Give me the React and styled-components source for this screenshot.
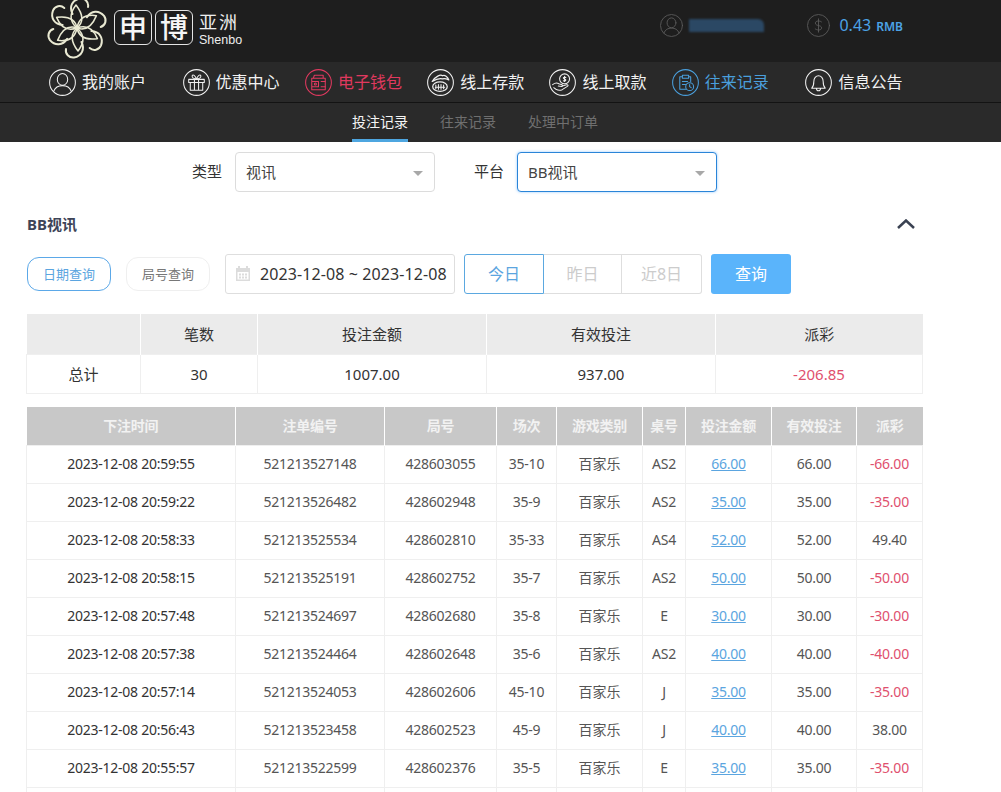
import React from 'react';
import styled, { createGlobalStyle } from 'styled-components';

const GlobalStyle = createGlobalStyle`
  html, body {
    margin: 0;
    padding: 0;
    height: 792px;
    overflow: hidden;
    background: #fff;
    font-family: "Noto Sans", "Open Sans", "Noto Sans CJK SC", sans-serif;
  }
`;

const Page = styled.div`
  width: 1001px;
  height: 792px;
  overflow: hidden;
`;

const TopBar = styled.header`
  height: 62px;
  background: #1e1e1e;
  display: flex;
  align-items: center;
  padding: 0 98px 0 46px;
`;

const Logo = styled.div`
  display: flex;
  align-items: center;
  gap: 3px;
  height: 62px;
  margin-top: -7px;
`;

const LogoMark = styled.svg`
  margin-right: 3px;
`;

const LogoBox = styled.span`
  width: 38px;
  height: 35px;
  box-sizing: border-box;
  border: 1px solid #e4e4e4;
  border-radius: 6px;
  color: #f6f6f6;
  font-size: 28px;
  font-weight: 500;
  line-height: 31px;
  text-align: center;
  font-family: "Noto Sans CJK SC", sans-serif;
`;

const LogoWords = styled.div`
  display: flex;
  flex-direction: column;
  margin: 3px 0 0 3px;
  color: #eee;
`;

const LogoCn = styled.span`
  font-size: 18px;
  line-height: 20px;
  letter-spacing: 2px;
  font-family: "Noto Sans CJK SC", sans-serif;
`;

const LogoEn = styled.span`
  font-size: 12.5px;
  line-height: 14px;
  margin-top: 2px;
  font-family: "Liberation Sans", sans-serif;
`;

const Account = styled.div`
  margin-left: auto;
  display: flex;
  align-items: center;
  margin-top: -12px;
`;

const BlurredName = styled.div`
  width: 75px;
  height: 13px;
  margin: 0 43px 0 6px;
  background: #2b4864;
  border-top-right-radius: 6px;
  filter: blur(1px);
`;

const Balance = styled.span`
  color: #4ca3e6;
  font-size: 16px;
  margin-left: 9px;
`;

const BalanceUnit = styled.span`
  font-size: 12px;
  margin-left: 5px;
  font-weight: 600;
`;

const Nav = styled.nav`
  height: 40px;
  background: #292929;
  border-bottom: 1px solid #131313;
  display: flex;
  align-items: center;
  padding-left: 49px;
`;

const NavItem = styled.a`
  flex: 0 0 ${p => (p.$wide ? 133.6 : 122.3)}px;
  display: flex;
  align-items: center;
  gap: 6px;
  font-size: 16px;
  line-height: 22px;
  color: ${p => p.$color || '#f2f2f2'};
  font-family: "Noto Sans CJK SC", sans-serif;
  white-space: nowrap;
`;

const NavLabel = styled.span`
  padding-bottom: 2px;
`;

const SubNav = styled.div`
  height: 39px;
  background: #2a2a2a;
  display: flex;
  padding-left: 352px;
  gap: 32px;
`;

const SubTab = styled.a`
  box-sizing: border-box;
  height: 39px;
  line-height: 37px;
  font-size: 14px;
  font-family: "Noto Sans CJK SC", sans-serif;
  color: ${p => (p.$active ? '#f4f4f4' : '#6f6f6f')};
  border-bottom: 3px solid ${p => (p.$active ? '#4ea6e0' : 'transparent')};
`;

const Content = styled.main`
  padding: 10px 78px 0 27px;
  font-family: "Noto Sans", "Noto Sans CJK SC", sans-serif;
`;

const SelectRow = styled.div`
  display: flex;
  align-items: center;
  padding-left: 165px;
`;

const SelectLabel = styled.label`
  font-size: 15px;
  color: #333;
  margin-right: 13px;
  margin-top: -4px;
`;

const Select = styled.div`
  box-sizing: border-box;
  width: 200px;
  height: 40px;
  margin-right: 39px;
  padding: 0 11px 2px 10px;
  display: flex;
  align-items: center;
  justify-content: space-between;
  font-size: 15px;
  color: #444;
  background: #fff;
  border-radius: 4px;
  border: 1px solid ${p => (p.$focus ? '#2a85d8' : '#dcdcdc')};
  box-shadow: ${p => (p.$focus ? '0 0 3px rgba(64,158,255,.55)' : 'none')};
`;

const Caret = styled.i`
  width: 0;
  height: 0;
  border-left: 5px solid transparent;
  border-right: 5px solid transparent;
  border-top: 5px solid #a8a8a8;
  margin: 4px 0 0;
`;

const SectionHead = styled.div`
  display: flex;
  align-items: center;
  justify-content: space-between;
  margin-top: 22px;
  height: 20px;
  padding-right: 8px;
`;

const SectionTitle = styled.h3`
  margin: -2px 0 0;
  font-size: 15px;
  font-weight: 700;
  color: #3d4457;
`;

const FilterRow = styled.div`
  display: flex;
  align-items: center;
  margin-top: 20px;
  height: 40px;
`;

const Pill = styled.button`
  width: 84px;
  height: 34px;
  padding: 0 0 2px;
  margin-right: 15px;
  background: #fff;
  font: inherit;
  font-size: 13px;
  border-radius: 12px;
  border: 1px solid ${p => (p.$active ? '#5ba8e8' : '#efefef')};
  color: ${p => (p.$active ? '#5ba5e0' : '#777')};
`;

const DateField = styled.div`
  box-sizing: border-box;
  width: 230px;
  height: 40px;
  display: flex;
  align-items: center;
  gap: 9px;
  padding: 0 0 1px 9px;
  border: 1px solid #dedede;
  border-radius: 3px;
  font-size: 16px;
  letter-spacing: 0.1px;
  color: #333;
  white-space: nowrap;
`;

const Segments = styled.div`
  display: flex;
  margin-left: 9px;
  height: 40px;
`;

const Segment = styled.button`
  box-sizing: border-box;
  width: ${p => p.$w}px;
  height: 40px;
  padding: 0 0 2px;
  background: #fff;
  font: inherit;
  font-size: 16px;
  color: ${p => (p.$active ? '#5ba5e0' : '#ccc')};
  border: 1px solid ${p => (p.$active ? '#5ba8e0' : '#dedede')};
  border-left-width: ${p => (p.$active ? 1 : 0)}px;
  border-radius: ${p => p.$radius};
`;

const QueryButton = styled.button`
  width: 80px;
  height: 40px;
  margin-left: 9px;
  padding: 0 0 2px;
  border: 0;
  border-radius: 3px;
  background: #5ab4fb;
  color: #fff;
  font: inherit;
  font-size: 16px;
`;

const Table = styled.table`
  width: 896px;
  table-layout: fixed;
  border-collapse: collapse;
  margin: ${p => p.$top}px 0 0 -1px;
`;

const SummaryHead = styled.th`
  height: 39px;
  padding: 0 0 1px;
  background: #ebebeb;
  border-left: 1px solid #fff;
  font-size: 15px;
  font-weight: 400;
  color: #333;
  &:first-child { border-left: 0; }
`;

const SummaryCell = styled.td`
  height: 37px;
  padding: 0 0 1px;
  text-align: center;
  font-size: 15px;
  color: ${p => (p.$red ? '#e0506e' : '#333')};
  border: 1px solid #efefef;
`;

const DetailHead = styled.th`
  height: 35px;
  padding: 0 0 3px;
  background: #c8c8c8;
  border-left: 1px solid #fff;
  font-size: 14px;
  font-weight: 700;
  letter-spacing: -0.3px;
  color: #f2f2f2;
  &:first-child { border-left: 0; }
`;

const DetailCell = styled.td`
  height: 34px;
  padding: 0 0 3px;
  text-align: center;
  font-size: 14px;
  letter-spacing: ${p => (p.$cjk ? 0 : -0.25)}px;
  color: ${p => (p.$red ? '#e0506e' : p.$dark ? '#333' : '#555')};
  border: 1px solid #efefef;
`;

const AmountLink = styled.a`
  color: #5ba5e0;
  text-decoration: underline;
`;

const CircleIcon = ({ color = '#f0f0f0', size = 27, children }) => (
  <svg width={size} height={size} viewBox="0 0 26 26" fill="none" stroke={color} strokeWidth="1" strokeLinecap="round" strokeLinejoin="round">
    <circle cx="13" cy="13" r="12.4" />
    {children}
  </svg>
);

const UserGlyph = () => (
  <>
    <ellipse cx="13" cy="10" rx="5" ry="5.6" />
    <path d="M4.5 21.5C6 17.5 9 16 13 16s7 1.5 8.5 5.5" />
  </>
);

const GiftGlyph = () => (
  <>
    <path d="M5.500 10h15v3h-15zM7 13v7.500h12V13M11 10v10.500M15 10v10.500" />
    <path d="M13 10c-2-.5-4.500-1.500-4.200-3.400C9.300 4.800 12 6 13 10c1-4 3.700-5.200 4.200-3.400C17.500 8.500 15 9.500 13 10z" />
  </>
);

const WalletGlyph = () => (
  <>
    <path d="M6.500 9h13v11h-13zM8 9l1-3h8.500v3M6.500 12H13v5H6.500" />
    <path d="M15.500 12h4M15.500 17h4" />
    <circle cx="10" cy="14.500" r="1" />
  </>
);

const DepositGlyph = () => (
  <>
    <ellipse cx="12.500" cy="17" rx="7" ry="4.500" strokeWidth="1.200" />
    <path d="M8 17.500h9M8.500 15.500v3.500M11 15v4.500M13.500 15v4.500M16 15.500v3.500" />
    <path d="M5 12c3-5 8-7 10-5.500 2-1 5 1 6 4-2-1-4-2-6-1-2-.5-6 0-10 2.500z" strokeWidth="1.200" />
  </>
);

const WithdrawGlyph = () => (
  <>
    <circle cx="15" cy="9.500" r="4.800" />
    <path d="M15 7v5M13.800 11.300c1 .6 2.400.3 2.400-.6 0-1.300-2.400-.8-2.400-2 0-.9 1.400-1.100 2.400-.6" />
    <path d="M3.500 15c2-1.500 4-2 6-.8l3 1c1.200.5.800 1.800-.5 1.600l-3-.4M12 16.500l5-1.300c1.400-.3 1.800.8.700 1.500l-5 3.200c-2 1-4 .8-6-.4L4.500 18" />
  </>
);

const RecordGlyph = ({ color }) => (
  <>
    <path d="M13.500 19.500H7.500V7.500h2M16.500 7.500h1.500V12" />
    <path d="M10 6h6v3h-6zM10 12h5M10 15h3" />
    <circle cx="17" cy="17" r="3.800" />
    <path d="M17 15v2l1.500 1" stroke={color} />
  </>
);

const BellGlyph = () => (
  <path d="M6.500 18.500c1.500-1.500 2-3 2-6.500 0-3 2-5.500 4.500-5.500s4.500 2.500 4.500 5.500c0 3.500.5 5 2 6.500zM11 18.500c0 1.500 1 2.500 2 2.500s2-1 2-2.500" />
);

const DollarGlyph = () => (
  <path d="M13 5.500v15M16.500 9c-1-1.500-7-2-7 1.300 0 3.700 7 1.900 7 5.400 0 3.300-6 2.800-7.300 1" />
);

const FlowerLogo = () => (
  <LogoMark width="62" height="62" viewBox="-31 -31 62 62" fill="none" stroke="#e9e9d2" strokeWidth="2" strokeLinecap="round" strokeLinejoin="round">
    {[0, 60, 120, 180, 240, 300].map(angle => (
      <g key={angle} transform={`rotate(${angle})`}>
        <path d="M0 0C-7 -6 -8 -14 -1 -23C6 -14 7 -6 0 0" strokeWidth="1.500" />
        <path d="M-4.500 -14C-8 -21 -5 -28 3 -29.500C8 -30 12 -26 11 -21" />
      </g>
    ))}
  </LogoMark>
);

const CalendarIcon = () => (
  <svg width="16" height="17" viewBox="0 0 16 17" fill="#dcdcdc">
    <path d="M1 3h2V1h2v2h6V1h2v2h2v13H1zM2.500 7v7.500h11V7z" />
    <path d="M4 8.500h2v2H4zM7 8.500h2v2H7zM10 8.500h2v2h-2zM4 11.500h2v2H4zM7 11.500h2v2H7zM10 11.500h2v2h-2z" />
  </svg>
);

const ChevronUp = () => (
  <svg width="18" height="10" viewBox="0 0 18 10" fill="none" stroke="#3a4252" strokeWidth="2.500">
    <polyline points="1,9 9,1.500 17,9" />
  </svg>
);

const navItems = [
  { label: '我的账户', wide: true, glyph: <UserGlyph /> },
  { label: '优惠中心', glyph: <GiftGlyph /> },
  { label: '电子钱包', color: '#e0395f', glyph: <WalletGlyph /> },
  { label: '线上存款', glyph: <DepositGlyph /> },
  { label: '线上取款', glyph: <WithdrawGlyph /> },
  { label: '往来记录', wide: true, color: '#4a9fdc', glyph: <RecordGlyph color="#4a9fdc" /> },
  { label: '信息公告', glyph: <BellGlyph /> },
];

const summaryCols = [114, 117, 229, 229, 207];
const detailCols = [209, 149, 112, 60, 86, 43, 86, 85, 66];
const detailHeads = ['下注时间', '注单编号', '局号', '场次', '游戏类别', '桌号', '投注金额', '有效投注', '派彩'];

const rows = [
  ['2023-12-08 20:59:55', '521213527148', '428603055', '35-10', 'AS2', '66.00', '-66.00'],
  ['2023-12-08 20:59:22', '521213526482', '428602948', '35-9', 'AS2', '35.00', '-35.00'],
  ['2023-12-08 20:58:33', '521213525534', '428602810', '35-33', 'AS4', '52.00', '49.40'],
  ['2023-12-08 20:58:15', '521213525191', '428602752', '35-7', 'AS2', '50.00', '-50.00'],
  ['2023-12-08 20:57:48', '521213524697', '428602680', '35-8', 'E', '30.00', '-30.00'],
  ['2023-12-08 20:57:38', '521213524464', '428602648', '35-6', 'AS2', '40.00', '-40.00'],
  ['2023-12-08 20:57:14', '521213524053', '428602606', '45-10', 'J', '35.00', '-35.00'],
  ['2023-12-08 20:56:43', '521213523458', '428602523', '45-9', 'J', '40.00', '38.00'],
  ['2023-12-08 20:55:57', '521213522599', '428602376', '35-5', 'E', '35.00', '-35.00'],
];

const Columns = ({ widths }) => (
  <colgroup>
    {widths.map((w, i) => <col key={i} width={w} />)}
  </colgroup>
);

export default function App() {
  return (
    <Page>
      <GlobalStyle />
      <TopBar>
        <Logo>
          <FlowerLogo />
          <LogoBox>申</LogoBox>
          <LogoBox>博</LogoBox>
          <LogoWords>
            <LogoCn>亚洲</LogoCn>
            <LogoEn>Shenbo</LogoEn>
          </LogoWords>
        </Logo>
        <Account>
          <CircleIcon color="#5c5c5c" size={23}><UserGlyph /></CircleIcon>
          <BlurredName />
          <CircleIcon color="#5c5c5c" size={23}><DollarGlyph /></CircleIcon>
          <Balance>0.43<BalanceUnit>RMB</BalanceUnit></Balance>
        </Account>
      </TopBar>

      <Nav>
        {navItems.map(item => (
          <NavItem key={item.label} $wide={item.wide} $color={item.color}>
            <CircleIcon color={item.color || '#f0f0f0'}>{item.glyph}</CircleIcon>
            <NavLabel>{item.label}</NavLabel>
          </NavItem>
        ))}
      </Nav>

      <SubNav>
        <SubTab $active>投注记录</SubTab>
        <SubTab>往来记录</SubTab>
        <SubTab>处理中订单</SubTab>
      </SubNav>

      <Content>
        <SelectRow>
          <SelectLabel>类型</SelectLabel>
          <Select>视讯<Caret /></Select>
          <SelectLabel>平台</SelectLabel>
          <Select $focus>BB视讯<Caret /></Select>
        </SelectRow>

        <SectionHead>
          <SectionTitle>BB视讯</SectionTitle>
          <ChevronUp />
        </SectionHead>

        <FilterRow>
          <Pill $active>日期查询</Pill>
          <Pill>局号查询</Pill>
          <DateField>
            <CalendarIcon />
            2023-12-08 ~ 2023-12-08
          </DateField>
          <Segments>
            <Segment $active $w={80} $radius="3px 0 0 3px">今日</Segment>
            <Segment $w={78} $radius="0">昨日</Segment>
            <Segment $w={80} $radius="0 3px 3px 0">近8日</Segment>
          </Segments>
          <QueryButton>查询</QueryButton>
        </FilterRow>

        <Table $top={20}>
          <Columns widths={summaryCols} />
          <thead>
            <tr>
              <SummaryHead />
              <SummaryHead>笔数</SummaryHead>
              <SummaryHead>投注金额</SummaryHead>
              <SummaryHead>有效投注</SummaryHead>
              <SummaryHead>派彩</SummaryHead>
            </tr>
          </thead>
          <tbody>
            <tr>
              <SummaryCell>总计</SummaryCell>
              <SummaryCell>30</SummaryCell>
              <SummaryCell>1007.00</SummaryCell>
              <SummaryCell>937.00</SummaryCell>
              <SummaryCell $red>-206.85</SummaryCell>
            </tr>
          </tbody>
        </Table>

        <Table $top={13}>
          <Columns widths={detailCols} />
          <thead>
            <tr>
              {detailHeads.map(h => <DetailHead key={h}>{h}</DetailHead>)}
            </tr>
          </thead>
          <tbody>
            {rows.map(r => (
              <tr key={r[1]}>
                <DetailCell $dark>{r[0]}</DetailCell>
                <DetailCell>{r[1]}</DetailCell>
                <DetailCell>{r[2]}</DetailCell>
                <DetailCell>{r[3]}</DetailCell>
                <DetailCell $cjk>百家乐</DetailCell>
                <DetailCell>{r[4]}</DetailCell>
                <DetailCell><AmountLink>{r[5]}</AmountLink></DetailCell>
                <DetailCell>{r[5]}</DetailCell>
                <DetailCell $red={r[6].startsWith('-')}>{r[6]}</DetailCell>
              </tr>
            ))}
            <tr>
              {detailCols.map((w, i) => <DetailCell key={i} />)}
            </tr>
          </tbody>
        </Table>
      </Content>
    </Page>
  );
}
